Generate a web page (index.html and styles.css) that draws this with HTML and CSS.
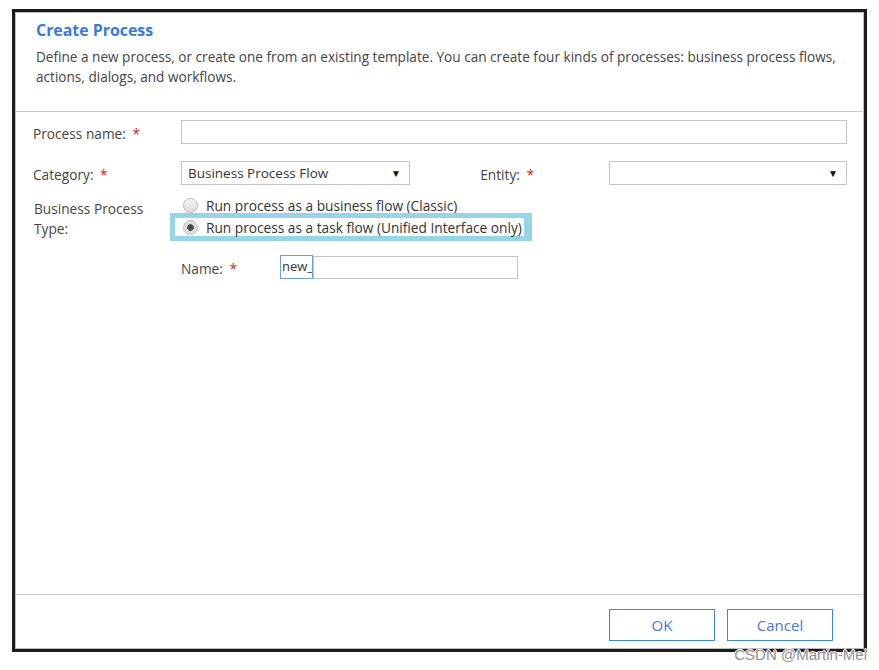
FILE: index.html
```html
<!DOCTYPE html>
<html lang="en">

<head>
    <meta charset="UTF-8">
    <title>Create Process</title>
    <link rel="stylesheet" href="styles.css">
</head>

<body>

    <div class="dialog">
        <div class="header">
            <h1>Create Process</h1>
            <p class="desc">Define a new process, or create one from an existing template. You can create four kinds of processes: business process flows, actions, dialogs, and workflows.</p>
        </div>

        <div class="form">
            <div class="row">
                <label class="label">Process name: <span class="req">*</span></label>
                <input type="text" class="text-input wide">
            </div>

            <div class="row">
                <label class="label">Category: <span class="req">*</span></label>
                <div class="select cat">
                    <span>Business Process Flow</span>
                    <span class="arrow">&#9660;</span>
                </div>
                <label class="entity-label">Entity: <span class="req">*</span></label>
                <div class="select entity">
                    <span></span>
                    <span class="arrow">&#9660;</span>
                </div>
            </div>

            <div class="row type-row">
                <label class="label type-label">Business Process Type:</label>
                <div class="radios">
                    <div class="radio-line">
                        <input type="radio" name="ptype" id="classic">
                        <label for="classic">Run process as a business flow (Classic)</label>
                    </div>
                    <div class="radio-line highlight">
                        <input type="radio" name="ptype" id="task" checked>
                        <label for="task">Run process as a task flow (Unified Interface only)</label>
                    </div>
                </div>
            </div>

            <div class="row name-row">
                <span class="label"></span>
                <label class="name-label">Name: <span class="req">*</span></label>
                <div class="prefix">new_</div>
                <input type="text" class="text-input name-input">
            </div>
        </div>

        <div class="footer">
            <button class="btn">OK</button>
            <button class="btn">Cancel</button>
        </div>

        <div class="watermark">CSDN @Martin-Mei</div>
    </div>

</body>

</html>
```

FILE: styles.css
```css
html,
body {
    height: 670px;
}

body {
    font-family: 'Open Sans', 'Noto Sans', sans-serif;
    background-color: #fff;
    margin: 0;
    padding: 0;
}

.dialog {
    position: relative;
    width: 855px;
    height: 643px;
    margin: 9px 0 0 12px;
    border: 3px solid #1c1c1c;
    box-shadow: inset 1px 1px 0 #bdbdbd, inset -1px -1px 0 #bdbdbd;
    box-sizing: border-box;
    display: flex;
    flex-direction: column;
}

.header {
    height: 100px;
    padding: 8px 18px 0 21px;
    border-bottom: 1px solid #c6c9cc;
    box-sizing: border-box;
}

.header h1 {
    margin: 0;
    font-size: 15.9px;
    line-height: 21px;
    font-weight: bold;
    color: #3b7ad6;
}

.desc {
    margin: 6px 0 0 0;
    font-size: 13.6px;
    line-height: 20px;
    color: #444;
}

.form {
    flex: 1;
    padding: 8px 17px 0 18px;
}

.row {
    display: flex;
    align-items: center;
    margin-bottom: 17px;
}

.label {
    width: 148px;
    flex-shrink: 0;
    font-size: 13.7px;
    color: #444;
    padding-top: 3px;
}

.req {
    color: #d21f1f;
    margin-left: 3px;
}

.text-input {
    height: 24px;
    border: 1px solid #c4c4c4;
    box-sizing: border-box;
    outline: none;
    padding: 0 6px;
    font-family: inherit;
}

.wide {
    flex: 1;
}

.select {
    height: 24px;
    border: 1px solid #c4c4c4;
    box-sizing: border-box;
    display: flex;
    justify-content: space-between;
    align-items: center;
    padding: 0 8px 0 6px;
    font-size: 13.5px;
    color: #333;
}

.select .arrow {
    font-size: 10px;
    color: #111;
}

.cat {
    width: 229px;
}

.entity {
    width: 238px;
}

.entity-label {
    width: 199px;
    text-align: right;
    padding-right: 75px;
    box-sizing: border-box;
    font-size: 13.7px;
    color: #444;
    padding-top: 3px;
}

.type-row {
    align-items: flex-start;
    margin-top: -6px;
    margin-bottom: 14px;
}

.type-label {
    width: 120px;
    margin-right: 28px;
    line-height: 20px;
    padding-top: 3px;
    padding-left: 1px;
}

.radios {
    display: flex;
    flex-direction: column;
}

.radio-line {
    display: flex;
    align-items: center;
    height: 18px;
    font-size: 13.7px;
    color: #333;
}

.radio-line input {
    appearance: none;
    width: 15px;
    height: 15px;
    margin: 0 8px 0 1px;
    border: 1px solid #b9b9b9;
    border-radius: 50%;
    background: linear-gradient(#f4f4f4, #dcdcdc);
    box-sizing: border-box;
}

.radio-line input:checked {
    background: radial-gradient(circle, #4a4a4a 0, #4a4a4a 3px, #d8d8d8 3.5px, #ececec 100%);
}

.highlight {
    margin-left: -12px;
    margin-top: -1px;
    padding-left: 7px;
    padding-right: 2px;
    border: 5px solid #96d5e8;
    border-right-width: 8px;
    width: fit-content;
}

.name-row {
    margin-bottom: 0;
}

.name-row .label {
    width: 148px;
}

.name-label {
    width: 99px;
    font-size: 13.7px;
    color: #444;
    padding-top: 3px;
}

.prefix {
    height: 24px;
    width: 33px;
    border: 1px solid #6c9fd6;
    box-sizing: border-box;
    font-size: 13px;
    line-height: 20px;
    color: #333;
    padding-left: 1px;
    overflow: hidden;
}

.name-input {
    width: 205px;
    height: 23px;
}

.footer {
    height: 55px;
    border-top: 1px solid #c6c9cc;
    display: flex;
    justify-content: flex-end;
    align-items: flex-start;
    padding: 14px 31px 0 0;
    gap: 12px;
    box-sizing: border-box;
}

.btn {
    width: 106px;
    height: 32px;
    background-color: #fff;
    border: 1px solid #3a8ad8;
    color: #4c78cc;
    font-family: inherit;
    font-size: 15px;
    cursor: pointer;
}

.watermark {
    position: absolute;
    right: -3px;
    bottom: -14px;
    font-family: 'Liberation Sans', sans-serif;
    font-size: 15px;
    color: #8f8f8f;
    text-shadow: 1px 0 0 #fff, -1px 0 0 #fff, 0 1px 0 #fff, 0 -1px 0 #fff;
}
```
